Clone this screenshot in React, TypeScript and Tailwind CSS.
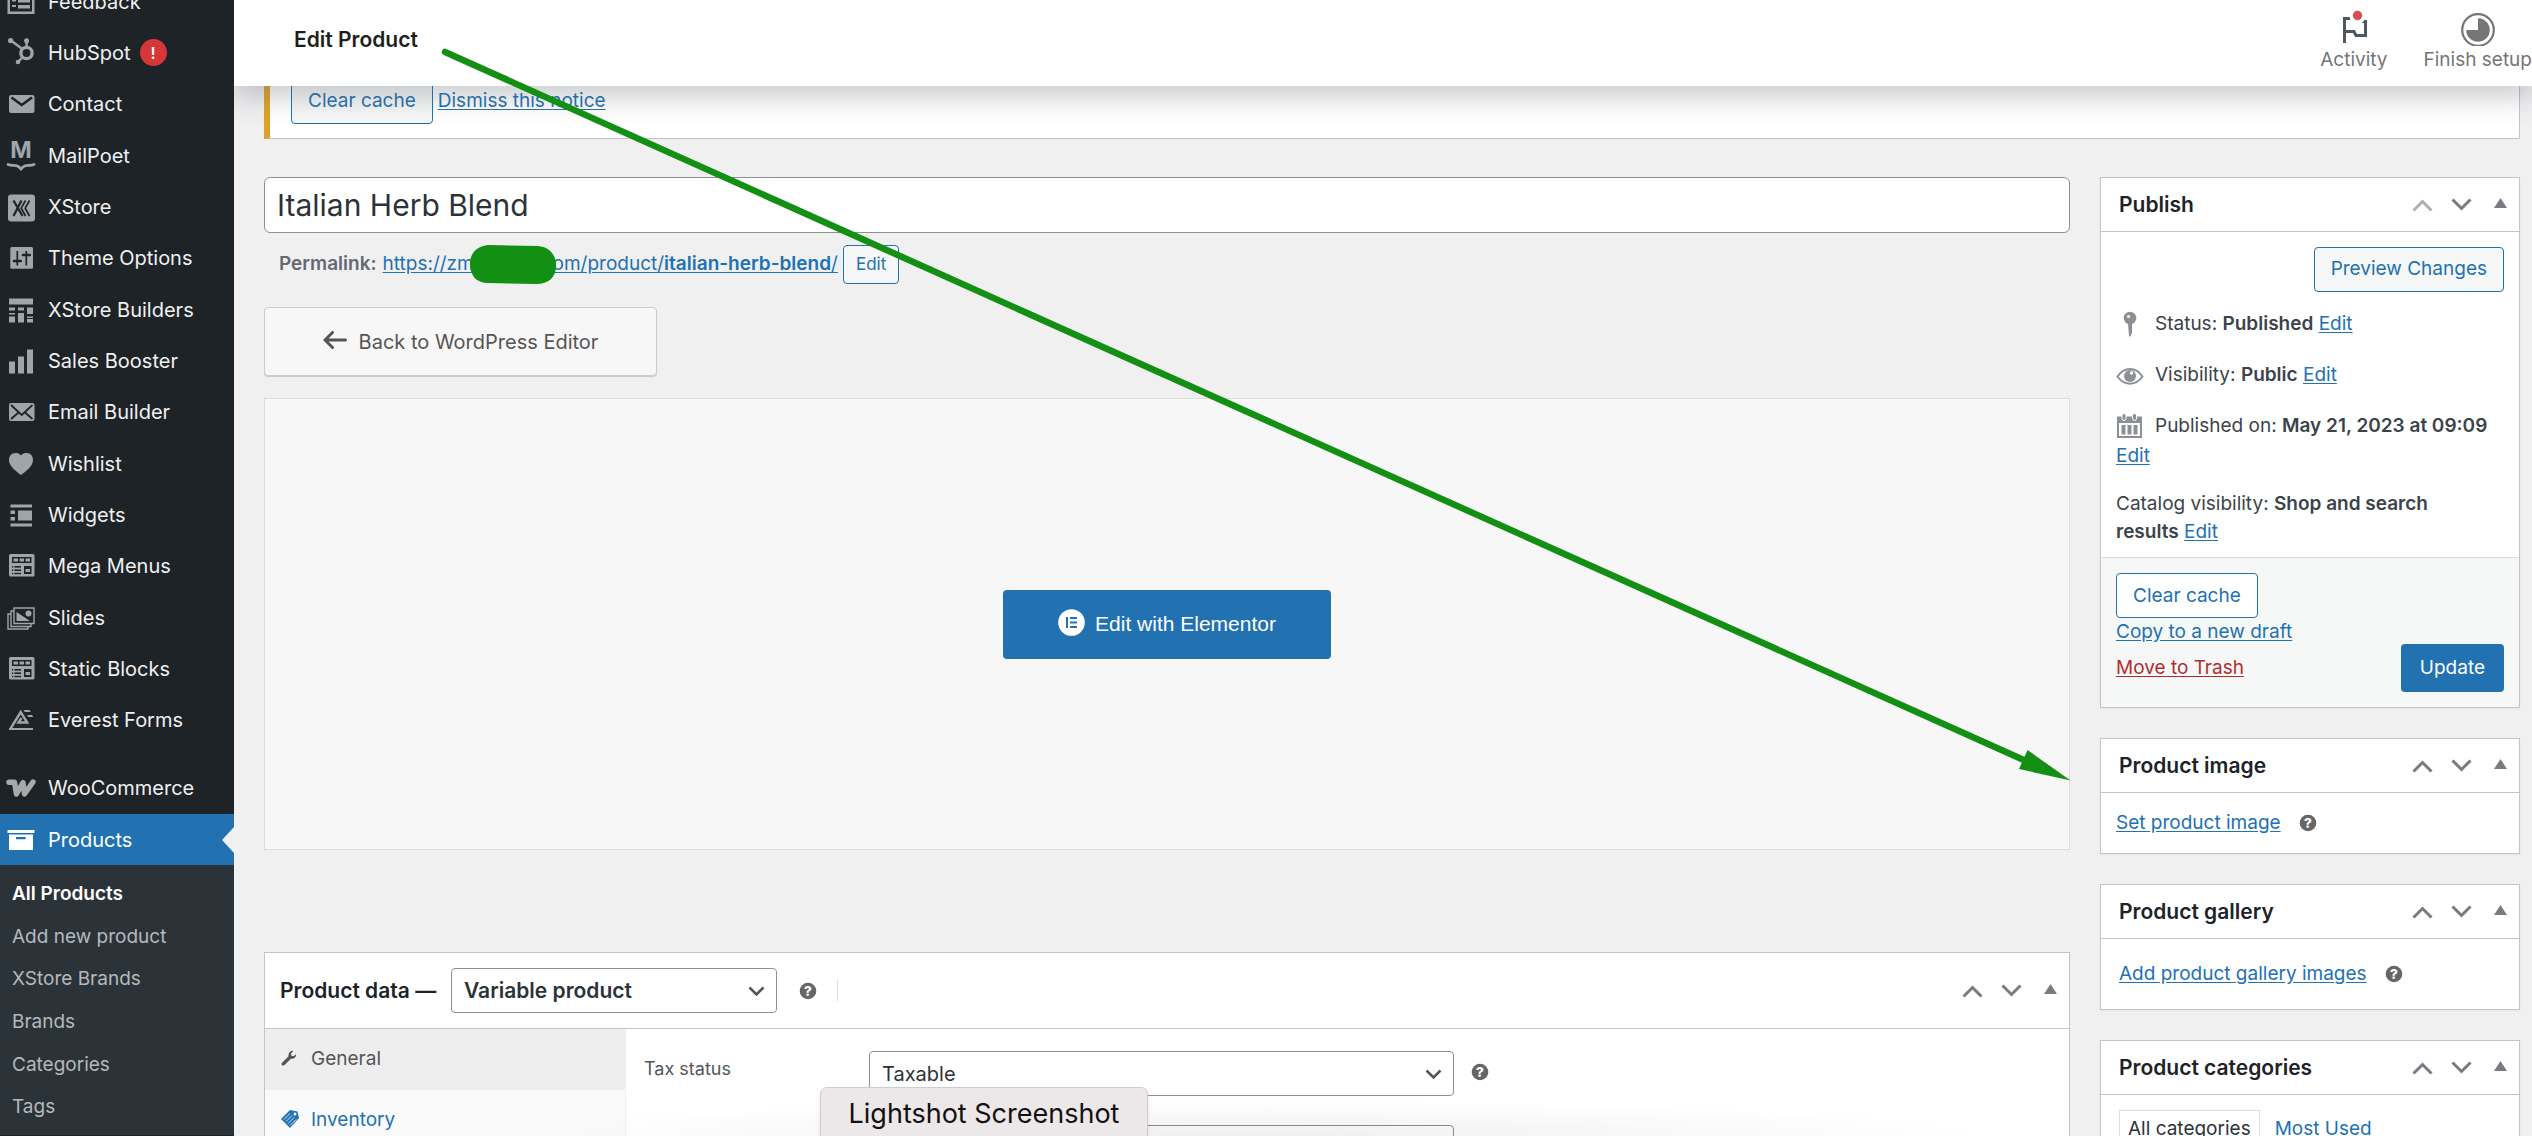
import type { ReactNode } from "react";
import clsx from "clsx";

const ICON = "h-[30px] w-[30px] shrink-0";

function MenuIcon({ children }: { children: ReactNode }) {
  return (
    <svg viewBox="0 0 30 30" className={ICON} fill="currentColor" aria-hidden="true">
      {children}
    </svg>
  );
}

const DARK = "#1d2327";

const blocksIcon = (
  <MenuIcon>
    <rect x="3" y="3" width="25.5" height="22.5" rx="1.5" />
    <g fill={DARK}>
      <rect x="6" y="6" width="19.5" height="6" />
      <rect x="6" y="15" width="9" height="1.6" />
      <rect x="6" y="18.4" width="9" height="1.6" />
      <rect x="6" y="21.8" width="9" height="1.4" />
      <rect x="18" y="15" width="7.5" height="8" />
    </g>
    <rect x="7.5" y="7.5" width="4.5" height="3" />
    <rect x="13.5" y="7.5" width="4.5" height="3" />
    <rect x="19.5" y="7.5" width="4.5" height="3" />
    <rect x="19.5" y="18" width="4.5" height="3" />
    <rect x="7.2" y="15" width="1.2" height="8" />
  </MenuIcon>
);

const menu: { name: string; icon: ReactNode; alert?: boolean }[] = [
  {
    name: "Feedback",
    icon: (
      <MenuIcon>
        <path fillRule="evenodd" d="M1.500 0h27v27h-27zM4 3v21.500h22V3z" />
        <rect x="12" y="6" width="12" height="3.500" />
        <rect x="12" y="12" width="12" height="3.500" />
        <rect x="12" y="18" width="12" height="3.500" />
        <rect x="6" y="12.500" width="4" height="2" />
        <rect x="6" y="18" width="4" height="2" />
      </MenuIcon>
    ),
  },
  {
    name: "HubSpot",
    alert: true,
    icon: (
      <MenuIcon>
        <circle cx="20.500" cy="15" r="5.600" fill="none" stroke="currentColor" strokeWidth="3.400" />
        <circle cx="4.600" cy="2.600" r="2.600" />
        <circle cx="20.600" cy="2.800" r="2.500" />
        <circle cx="12" cy="24" r="2.300" />
        <path d="M4.600 2.300 17 11.500M20.600 3v7M12 24l4.500-4.800" stroke="currentColor" strokeWidth="2.400" />
      </MenuIcon>
    ),
  },
  {
    name: "Contact",
    icon: (
      <MenuIcon>
        <rect x="3" y="6" width="25.500" height="18" rx="2.200" />
        <path d="M5.500 8.500 15.700 16 26 8.500" fill="none" stroke={DARK} strokeWidth="2.600" />
      </MenuIcon>
    ),
  },
  {
    name: "MailPoet",
    icon: (
      <MenuIcon>
        <text x="15" y="17" textAnchor="middle" fontSize="23" fontWeight="700" fontFamily="Inter, sans-serif">
          M
        </text>
        <path
          d="M2 23.500c4 2 8-.5 11 2.500l2 2 2-2c3-3 7-.5 11-2.500"
          fill="none"
          stroke="currentColor"
          strokeWidth="2.800"
          strokeLinecap="round"
        />
      </MenuIcon>
    ),
  },
  {
    name: "XStore",
    icon: (
      <MenuIcon>
        <rect x="2" y="2.500" width="27" height="27" rx="3" />
        <path d="m7.500 8.500 9 15.500M15.500 8.500 7.500 24" fill="none" stroke={DARK} strokeWidth="2.200" />
        <path d="m19.500 8.500-4.300 7.700 4.300 7.800M23.500 8.500l-4.300 7.700 4.300 7.800" fill="none" stroke={DARK} strokeWidth="1.700" />
      </MenuIcon>
    ),
  },
  {
    name: "Theme Options",
    icon: (
      <MenuIcon>
        <rect x="4.300" y="4" width="22.700" height="21.700" rx="1.500" />
        <path d="M11.300 8v14.500M20.300 8v14.500" stroke={DARK} strokeWidth="1.700" />
        <path d="M8 18h6.800M17 12h6.800" stroke={DARK} strokeWidth="2.600" strokeLinecap="round" />
      </MenuIcon>
    ),
  },
  {
    name: "XStore Builders",
    icon: (
      <MenuIcon>
        <path d="M3 3.500h24v6H3zM3 12.500h6v3H3zM3 18h6v1.500H3zM3 21.500h6v6H3zM12 12.500h6v3h-6zM12 18h6v9.500h-6zM21 12.500h6V19h-6zM21 21.500h6v1.500h-6zM21 24h6v3.500h-6z" />
      </MenuIcon>
    ),
  },
  {
    name: "Sales Booster",
    icon: (
      <MenuIcon>
        <path d="M3 15.500h6v12H3zM12 10.500h6v17h-6zM21 3.500h6v24h-6z" />
      </MenuIcon>
    ),
  },
  {
    name: "Email Builder",
    icon: (
      <MenuIcon>
        <rect x="3" y="6" width="25.500" height="18" rx="2" />
        <path d="m5 8 10.700 10L26.500 8M5 22l7.500-6.500M26.500 22 19 15.500" fill="none" stroke={DARK} strokeWidth="1.800" />
      </MenuIcon>
    ),
  },
  {
    name: "Wishlist",
    icon: (
      <MenuIcon>
        <path d="M15 6.500C16.500 4.500 18.500 4 20.500 4 24.500 4 27 6.800 27 11c0 6-6.500 11-12 15C9.500 22 3 17 3 11c0-4.200 2.500-7 6.500-7 2 0 4 .5 5.500 2.500z" />
      </MenuIcon>
    ),
  },
  {
    name: "Widgets",
    icon: (
      <MenuIcon>
        <path d="M4.500 4.500H26v3H4.500zM4.500 23.500H26v3H4.500zM12 10.500h14v10H12zM4.500 10.500H9v3.500H4.500zM4.500 17H9v3.500H4.500z" />
      </MenuIcon>
    ),
  },
  { name: "Mega Menus", icon: blocksIcon },
  {
    name: "Slides",
    icon: (
      <MenuIcon>
        <path
          d="M8 5h20v15.500H8zM8 8H5v15.500h20v-3M5 11H2v15h20v-2.500"
          fill="none"
          stroke="currentColor"
          strokeWidth="1.400"
        />
        <path d="M10.500 9v9H24z" />
        <circle cx="22.500" cy="10.500" r="3" />
      </MenuIcon>
    ),
  },
  { name: "Static Blocks", icon: blocksIcon },
  {
    name: "Everest Forms",
    icon: (
      <MenuIcon>
        <path d="M3 23h24v2H3z" />
        <path d="M4 24.500 14.700 7l6.500 10.500h-8.700l3-4.500" fill="none" stroke="currentColor" strokeWidth="2.400" />
        <path d="M17.500 5h6l1.300 2h-6zM21 10h5l1.300 2h-5z" />
      </MenuIcon>
    ),
  },
];

const productLinks = ["All Products", "Add new product", "XStore Brands", "Brands", "Categories", "Tags"];

function Sidebar() {
  return (
    <nav className="z-20 w-[234px] shrink-0 overflow-hidden bg-[#1d2327] text-[20px] text-[#f0f0f1]">
      <ul className="-mt-6 grid h-[770px] auto-rows-fr">
        {menu.map((item) => (
          <li key={item.name}>
            <a href="#" className="flex h-full items-center gap-3 pl-1.5">
              <span className="text-[#a0a5aa]">{item.icon}</span>
              <span className="flex items-center gap-[9px]">
                {item.name}
                {item.alert && (
                  <span className="flex size-[27px] items-center justify-center rounded-full bg-[#d63638] text-base font-semibold text-white">
                    !
                  </span>
                )}
              </span>
            </a>
          </li>
        ))}
      </ul>
      <ul className="mt-4">
        <li>
          <a href="#" className="flex h-[52px] items-center gap-3 pl-1.5">
            <svg viewBox="0 0 30 30" className={clsx(ICON, "text-[#a7aaad]")} aria-hidden="true">
              <path
                d="M3 9.300h5.500L10.500 21 17 9.500 18.500 21 27 9"
                fill="none"
                stroke="currentColor"
                strokeWidth="5.400"
                strokeLinecap="round"
                strokeLinejoin="round"
              />
            </svg>
            WooCommerce
          </a>
        </li>
        <li>
          <a href="#" className="relative flex h-[51px] items-center gap-3 bg-[#2271b1] pl-1.5 text-white">
            <MenuIcon>
              <path d="M1.500 5h27v3h-27z" />
              <path fillRule="evenodd" d="M3 9.500h24v15.500H3zM10 12v2.200h9.700V12z" />
            </MenuIcon>
            Products
            <span className="absolute right-0 border-y-[13px] border-r-[12px] border-y-transparent border-r-[#f0f0f1]" />
          </a>
          <ul className="grid h-[270px] auto-rows-fr bg-[#2c3338] pt-2 pb-1.5 text-[19px] text-[#b4b9be]">
            {productLinks.map((name, i) => (
              <li key={name}>
                <a href="#" className={clsx("flex h-full items-center pl-3", i === 0 && "font-semibold text-white")}>
                  {name}
                </a>
              </li>
            ))}
          </ul>
        </li>
      </ul>
    </nav>
  );
}

function TopBar() {
  return (
    <header className="relative z-10 flex h-[86px] shrink-0 items-start justify-between bg-white pl-[60px] shadow-[0_12px_24px_0_rgba(85,93,102,0.3)]">
      <h1 className="pt-6 text-[21px] leading-8 font-semibold text-[#1e1e1e]">Edit Product</h1>
      <div className="flex text-[19px] leading-6 text-[#757575]">
        <button type="button" className="flex flex-col items-center gap-0.5 px-[18px] pt-2.5">
          <svg viewBox="0 0 36 36" className="size-9" aria-hidden="true">
            <path d="M8.500 33V8.500h8.500l2 3h10.500v14H20l-2-4H8.500" fill="none" stroke="#50575e" strokeWidth="3" />
            <circle cx="21.500" cy="6" r="8" fill="#fff" />
            <circle cx="21.500" cy="5.500" r="4.700" fill="#d94f4f" />
          </svg>
          Activity
        </button>
        <button type="button" className="flex flex-col items-center gap-0.5 pt-2.5 pl-[18px]">
          <svg viewBox="0 0 36 36" className="size-9" aria-hidden="true">
            <circle cx="18" cy="20" r="15.800" fill="none" stroke="#757575" strokeWidth="2.200" />
            <path d="M18 8.200A11.800 11.800 0 1 1 6.200 20H18z" fill="#757575" />
          </svg>
          Finish setup
        </button>
      </div>
    </header>
  );
}

function HelpTip() {
  return (
    <svg viewBox="0 0 18 18" className="size-[18px] shrink-0" role="img" aria-label="Help">
      <circle cx="9" cy="9" r="8.300" fill="#666" />
      <text x="9" y="13.700" textAnchor="middle" fontSize="13.500" fontWeight="800" fill="#fff" fontFamily="Inter, sans-serif">
        ?
      </text>
    </svg>
  );
}

function OrderButtons({ first }: { first?: boolean }) {
  return (
    <div className="flex items-center gap-[18px] pr-3 text-[#787c82]">
      <button type="button" aria-label="Move up" className={first ? "opacity-60" : undefined}>
        <svg viewBox="0 0 21 14" className="h-3.5 w-[21px]">
          <path d="m1.500 12.500 9-9 9 9" fill="none" stroke="currentColor" strokeWidth="3" />
        </svg>
      </button>
      <button type="button" aria-label="Move down">
        <svg viewBox="0 0 21 14" className="h-3.5 w-[21px]">
          <path d="m1.500 1.500 9 9 9-9" fill="none" stroke="currentColor" strokeWidth="3" />
        </svg>
      </button>
      <button type="button" aria-label="Toggle panel" className="pb-1 pl-1">
        <svg viewBox="0 0 13 10" className="h-2.5 w-[13px]">
          <path d="M6.500 0 13 10H0z" fill="currentColor" />
        </svg>
      </button>
    </div>
  );
}

function PostBox({ title, first, children }: { title: string; first?: boolean; children: ReactNode }) {
  return (
    <section className="border border-[#c3c4c7] bg-white shadow-xs">
      <div className="flex h-[54px] items-center justify-between border-b border-[#c3c4c7] pl-[18px]">
        <h2 className="text-[21px] font-semibold text-[#1d2327]">{title}</h2>
        <OrderButtons first={first} />
      </div>
      {children}
    </section>
  );
}

function Link({ children }: { children: ReactNode }) {
  return (
    <a href="#" className="text-[#2271b1] underline underline-offset-2">
      {children}
    </a>
  );
}

function OutlineButton({ children }: { children: ReactNode }) {
  return (
    <button
      type="button"
      className="h-[45px] rounded-[4px] border border-[#2271b1] bg-[#f6f7f7] px-4 whitespace-nowrap text-[#2271b1]"
    >
      {children}
    </button>
  );
}

function Select({ id, value, bold }: { id: string; value: string; bold?: boolean }) {
  return (
    <span className="relative flex grow">
      <select
        id={id}
        className={clsx(
          "h-[45px] w-full appearance-none rounded-[4px] border border-[#8c8f94] bg-white px-3 text-[#2c3338]",
          bold ? "text-[21px] font-semibold" : "text-[20px]",
        )}
      >
        <option>{value}</option>
      </select>
      <svg viewBox="0 0 17 11" className="pointer-events-none absolute top-[18px] right-3 h-[11px] w-[17px]">
        <path d="m1.500 1.500 7 7 7-7" fill="none" stroke="#50575e" strokeWidth="2.600" />
      </svg>
    </span>
  );
}

function PublishBox() {
  return (
    <PostBox title="Publish" first>
      <div className="px-[15px] pt-[15px] pb-[11px]">
        <div className="flex justify-end">
          <OutlineButton>Preview Changes</OutlineButton>
        </div>
        <div className="mt-[18px] flex items-center gap-[9px] leading-7">
          <svg viewBox="0 0 30 28" className="h-7 w-[30px]" fill="#8c8f94">
            <circle cx="14" cy="8" r="6.300" />
            <path d="M12 13h4v10l-2 4-1-1z" />
            <circle cx="12.500" cy="6.500" r="1.500" fill="#fff" />
          </svg>
          <p>
            Status: <b className="font-semibold">Published</b> <Link>Edit</Link>
          </p>
        </div>
        <div className="mt-[23px] flex items-center gap-[9px] leading-7">
          <svg viewBox="0 0 30 28" className="h-7 w-[30px]">
            <path d="M1.500 15.500C8 5.500 20 5.500 26.500 15.500 20 25 8 25 1.500 15.500z" fill="none" stroke="#8c8f94" strokeWidth="2" />
            <circle cx="14" cy="15" r="6" fill="#8c8f94" />
            <circle cx="15.500" cy="12" r="1.700" fill="#fff" />
          </svg>
          <p>
            Visibility: <b className="font-semibold">Public</b> <Link>Edit</Link>
          </p>
        </div>
        <div className="mt-[22px] leading-[30px]">
          <div className="flex items-center gap-[9px] whitespace-nowrap">
            <svg viewBox="0 0 30 28" className="h-7 w-[30px] shrink-0" fill="#8c8f94">
              <path d="M1 4.500h25v21.500H1zM3 11v13h21V11z" fillRule="evenodd" />
              <path d="M5.500 13h4v9.500h-4zM11.500 13h4v9.500h-4zM17.500 13h4v9.500h-4z" />
              <rect x="6" y="1.500" width="4" height="7" rx="2" stroke="#fff" />
              <rect x="16.500" y="1.500" width="4" height="7" rx="2" stroke="#fff" />
            </svg>
            <p>
              Published on: <b className="font-semibold">May 21, 2023 at 09:09</b>
            </p>
          </div>
          <Link>Edit</Link>
        </div>
        <p className="mt-[19px] w-[350px] leading-7">
          Catalog visibility: <b className="font-semibold">Shop and search results</b> <Link>Edit</Link>
        </p>
      </div>
      <div className="flex items-end justify-between border-t border-[#dcdcde] bg-[#f6f7f7] px-[15px] py-[15px]">
        <div className="flex flex-col items-start pb-2.5 leading-7">
          <button type="button" className="h-[45px] rounded-[4px] border border-[#2271b1] bg-white px-4 text-[#2271b1]">
            Clear cache
          </button>
          <Link>Copy to a new draft</Link>
          <a href="#" className="mt-2 text-[#b32d2e] underline underline-offset-2">
            Move to Trash
          </a>
        </div>
        <button type="button" className="h-12 rounded-[4px] bg-[#2271b1] px-[19px] text-white">
          Update
        </button>
      </div>
    </PostBox>
  );
}

function ProductData() {
  return (
    <section className="mt-[102px] border border-[#c3c4c7] bg-white">
      <div className="flex h-[76px] items-center justify-between border-b border-[#c3c4c7] pl-[15px]">
        <div className="flex items-center">
          <label htmlFor="product-type" className="w-[171px] text-[21px] font-semibold whitespace-nowrap text-[#1d2327]">
            Product data —
          </label>
          <span className="flex w-[326px]">
            <Select id="product-type" value="Variable product" bold />
          </span>
          <span className="ml-[22px] flex h-[21px] items-center border-r border-[#dcdcde] pr-5">
            <HelpTip />
          </span>
        </div>
        <OrderButtons />
      </div>
      <div className="flex">
        <ul className="w-[361px] shrink-0 border-r border-[#eee] bg-[#fafafa]">
          <li>
            <a href="#" className="flex h-[61px] items-center gap-3.5 bg-[#eee] pl-4 text-[#555]">
              <svg viewBox="0 0 18 20" className="mb-1 h-[18px] w-4">
                <path
                  d="M1 15.500 8.500 8C7.800 4.500 10.500 1.500 14 2l-2.800 3 .6 2.500 2.500.6L17 5.500c.3 3.500-2.500 6-5.800 5.300L4 18c-1.800 1.500-4.500-.5-3-2.500z"
                  fill="#555"
                />
              </svg>
              General
            </a>
          </li>
          <li>
            <a href="#" className="flex h-[61px] items-center gap-3 pl-4 text-[#2271b1]">
              <svg viewBox="0 0 18 20" className="mb-1 h-5 w-[18px]">
                <path d="m0 10 9-9 7.500 1.500L18 9l-9 10z" fill="#2271b1" />
                <path d="m3 10.500 6-6M5 12.500l6-6M7 14.500l6-6M9 16.500l6-6" stroke="#fff" strokeWidth=".8" />
                <circle cx="14" cy="5" r="1.500" fill="#fff" />
              </svg>
              Inventory
            </a>
          </li>
        </ul>
        <div className="grow pt-[22px] pl-[18px]">
          <div className="flex items-center">
            <label htmlFor="tax-status" className="w-[225px] pb-2.5 text-[18px] text-[#50575e]">
              Tax status
            </label>
            <span className="flex w-[585px]">
              <Select id="tax-status" value="Taxable" />
            </span>
            <span className="ml-[17px] pb-1">
              <HelpTip />
            </span>
          </div>
          <div className="mt-[29px] ml-[225px] flex w-[585px]">
            <Select id="tax-class" value="Standard" />
          </div>
        </div>
      </div>
    </section>
  );
}

function Editor() {
  return (
    <div className="min-w-0 grow">
      <input
        type="text"
        aria-label="Product name"
        defaultValue="Italian Herb Blend"
        className="block h-14 w-full rounded-[6px] border border-[#8c8f94] bg-white px-3 text-[30px] text-[#2c3338]"
      />
      <div className="mt-3 flex h-[39px] items-center pl-[15px] whitespace-nowrap">
        <b className="mr-1.5 font-semibold text-[#646970]">Permalink:</b>
        <a href="#" className="flex text-[#2271b1] underline underline-offset-2">
          <span className="w-[170px]">https://zm</span>
          <span>om/product/</span>
          <b className="font-semibold">italian-herb-blend</b>/
        </a>
        <button
          type="button"
          className="ml-[5px] h-[39px] rounded-[4px] border border-[#2271b1] bg-[#f6f7f7] px-3 text-[17px] text-[#2271b1]"
        >
          Edit
        </button>
      </div>
      <button
        type="button"
        className="mt-[23px] flex h-[69px] w-[393px] items-center justify-center gap-3 rounded-[4px] border border-[#ccc] bg-[#f7f7f7] text-[20px] text-[#555] shadow-[0_1px_0_#ccc]"
      >
        <svg viewBox="0 0 24 18" className="mb-1 h-[18px] w-6">
          <path d="M22.500 9H2.500M9.500 1.500 2 9l7.500 7.500" fill="none" stroke="#555" strokeWidth="3" strokeLinecap="round" />
        </svg>
        Back to WordPress Editor
      </button>
      <div className="mt-[22px] flex h-[452px] items-center justify-center border border-[#ddd] bg-[#f7f7f7]">
        <a
          href="#"
          className="flex h-[69px] w-[328px] items-center justify-center gap-2.5 rounded-[4px] bg-[#2271b1] font-['Liberation_Sans',sans-serif] text-[21px] text-white"
        >
          <svg viewBox="0 0 27 27" className="mb-1 size-[27px]">
            <circle cx="13.500" cy="13.500" r="13.300" fill="#fff" />
            <path d="M8 8h2v11H8zM12 8h7v2h-7zM12 12.500h7v2h-7zM12 17h7v2h-7z" fill="#2271b1" />
          </svg>
          Edit with Elementor
        </a>
      </div>
      <ProductData />
    </div>
  );
}

// Marker strokes drawn over the page
function Annotations() {
  return (
    <svg viewBox="0 0 2532 1136" className="pointer-events-none absolute top-0 left-0 z-30 w-full" fill="#138f14">
      <path d="M445 52 2026 761" stroke="#138f14" strokeWidth="6.500" strokeLinecap="round" />
      <path d="m2027.500 750 43 30.500-51.500-11.500z" />
      <path d="M488 245 538 246C550 247 556 255 556 266S549 284 536 284L488 283C476 283 470 275 470 264S477 246 488 245z" />
    </svg>
  );
}

export default function App() {
  return (
    <div className="relative flex h-screen overflow-hidden bg-[#f0f0f1] font-[Inter,'Liberation_Sans',sans-serif] text-[19px] text-[#3c434a]">
      <Sidebar />
      <div className="flex min-w-0 grow flex-col">
        <TopBar />
        <main className="min-h-0 grow overflow-hidden pr-3 pl-[30px]">
          <div className="-mt-3 flex items-center gap-[5px] border border-l-[6px] border-[#c3c4c7] border-l-[#dba32c] bg-white pt-1 pb-3.5 pl-[21px]">
            <OutlineButton>Clear cache</OutlineButton>
            <Link>Dismiss this notice</Link>
          </div>
          <div className="mt-[38px] flex items-start gap-[30px]">
            <Editor />
            <aside className="flex w-[420px] shrink-0 flex-col gap-[30px]">
              <PublishBox />
              <PostBox title="Product image">
                <div className="flex h-[60px] items-center gap-[18px] pl-[15px]">
                  <Link>Set product image</Link>
                  <HelpTip />
                </div>
              </PostBox>
              <PostBox title="Product gallery">
                <div className="flex h-[70px] items-center gap-[18px] pl-[18px]">
                  <Link>Add product gallery images</Link>
                  <HelpTip />
                </div>
              </PostBox>
              <PostBox title="Product categories">
                <div className="flex pt-[15px] pb-10 pl-[18px]">
                  <a href="#" className="h-[45px] border border-[#dcdcde] px-2 pt-1 leading-7 text-[#2c3338]">
                    All categories
                  </a>
                  <a href="#" className="pt-[5px] pl-[15px] leading-7 text-[#2271b1]">
                    Most Used
                  </a>
                </div>
              </PostBox>
            </aside>
          </div>
        </main>
      </div>
      <div className="pointer-events-none absolute bottom-0 left-[500px] h-9 w-[1500px] bg-radial-[at_50%_100%] from-black/6 to-transparent to-70%" />
      <Annotations />
      <div className="absolute top-[1087px] left-[820px] z-40 flex h-14 w-[328px] justify-center rounded-[7px] border border-[#d0cccf] bg-[#ece8ea] pt-2 text-[27px] leading-9 text-[#111] shadow-md">
        Lightshot Screenshot
      </div>
    </div>
  );
}
